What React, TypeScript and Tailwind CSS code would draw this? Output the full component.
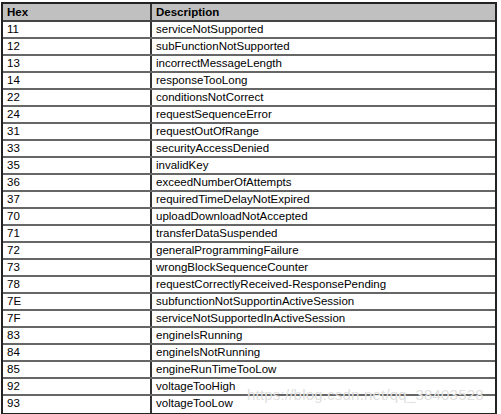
import React from 'react';

const rows: [string, string][] = [
  ['11', 'serviceNotSupported'],
  ['12', 'subFunctionNotSupported'],
  ['13', 'incorrectMessageLength'],
  ['14', 'responseTooLong'],
  ['22', 'conditionsNotCorrect'],
  ['24', 'requestSequenceError'],
  ['31', 'requestOutOfRange'],
  ['33', 'securityAccessDenied'],
  ['35', 'invalidKey'],
  ['36', 'exceedNumberOfAttempts'],
  ['37', 'requiredTimeDelayNotExpired'],
  ['70', 'uploadDownloadNotAccepted'],
  ['71', 'transferDataSuspended'],
  ['72', 'generalProgrammingFailure'],
  ['73', 'wrongBlockSequenceCounter'],
  ['78', 'requestCorrectlyReceived-ResponsePending'],
  ['7E', 'subfunctionNotSupportinActiveSession'],
  ['7F', 'serviceNotSupportedInActiveSession'],
  ['83', 'engineIsRunning'],
  ['84', 'engineIsNotRunning'],
  ['85', 'engineRunTimeTooLow'],
  ['92', 'voltageTooHigh'],
  ['93', 'voltageTooLow'],
];

export default function App() {
  return (
    <div
      className="relative w-[501px] h-[414px] bg-white pl-[1px] pt-[2px] text-[11.5px] text-black"
      style={{ fontFamily: '"Liberation Sans", Arial, sans-serif' }}
    >
      <div className="w-[496px] border-2 border-[#222]">
        {/* header */}
        <div className="flex h-[18px] bg-[#c0c0c0] border-b-2 border-[#444] font-bold">
          <div className="w-[149px] border-r-2 border-[#333] pl-[4px] leading-[16px]">Hex</div>
          <div className="flex-1 pl-[4px] leading-[16px]">Description</div>
        </div>
        {rows.map(([hex, desc], i) => (
          <div
            key={hex}
            className={`flex h-[17px] ${i < rows.length - 1 ? 'border-b-2 border-[#666]' : ''}`}
          >
            <div className="w-[149px] border-r-2 border-[#333] pl-[4px] leading-[15px]">{hex}</div>
            <div className="flex-1 pl-[4px] leading-[15px]">{desc}</div>
          </div>
        ))}
      </div>

      {/* watermark */}
      <div className="absolute left-[247px] top-[384px] text-[15px] tracking-[0.2px] text-[#e0e0e0] pointer-events-none">
        https://blog.csdn.net/qq_38403528
      </div>
    </div>
  );
}
